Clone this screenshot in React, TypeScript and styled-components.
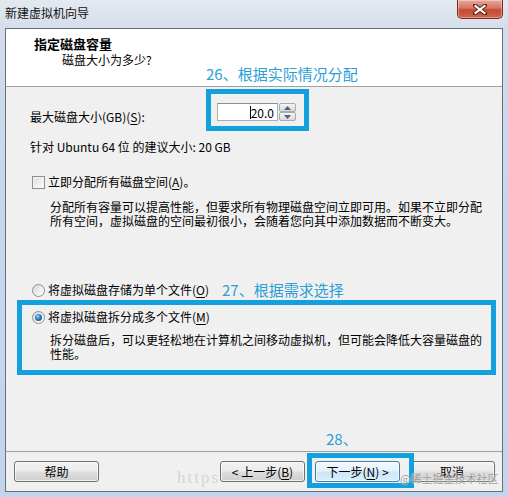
import styled, { createGlobalStyle } from 'styled-components';

const ACCENT = '#14a0dc';
const NOTE = '#2b9ed6';

const GlobalStyle = createGlobalStyle`
  html, body {
    margin: 0;
    padding: 0;
  }
  body {
    font-family: "Noto Sans CJK SC", "Noto Sans", sans-serif;
    font-size: 12px;
    color: #000;
  }
`;

const Window = styled.div`
  width: 508px;
  height: 497px;
  display: flex;
  flex-direction: column;
  background: linear-gradient(180deg, #e3e9f0 0%, #d3ddea 6%, #c9d8ec 30%, #c3d4ec 100%);
  overflow: hidden;
`;

const TitleBar = styled.div`
  height: 28px;
  flex: none;
  display: flex;
  align-items: flex-start;
  justify-content: space-between;
  padding: 0 5px;
`;

const TitleText = styled.span`
  line-height: 26px;
  font-size: 12px;
  color: #111;
`;

const CloseButton = styled.div`
  width: 46px;
  height: 19px;
  box-sizing: border-box;
  display: flex;
  align-items: center;
  justify-content: center;
  border: 1px solid #7a2a20;
  border-top: none;
  border-radius: 0 0 5px 5px;
  background: linear-gradient(180deg, #e9a89a 0%, #d7735f 45%, #c24a35 55%, #d0664c 100%);
  box-shadow: inset 0 0 0 1px rgba(255, 255, 255, 0.35);
`;

const Client = styled.div`
  margin: 0 5px;
  height: 464px;
  box-sizing: border-box;
  border: 1px solid #66717f;
  background: #f0f0f0;
  display: flex;
  flex-direction: column;
`;

const Header = styled.div`
  height: 58px;
  flex: none;
  box-sizing: border-box;
  background: #fff;
  border-bottom: 1px solid #a0a0a0;
  padding: 7px 0 0 28px;
  display: flex;
  flex-direction: column;
  align-items: flex-start;
`;

const HeaderTitle = styled.div`
  font-size: 13px;
  font-weight: 700;
  line-height: 16px;
`;

const HeaderSub = styled.div`
  margin: 1px 0 0 28px;
  line-height: 14px;
`;

const Note = styled.span<{ $size?: number }>`
  color: ${NOTE};
  font-size: ${({ $size }) => $size ?? 15}px;
  line-height: 18px;
  white-space: nowrap;
`;

const HeaderNote = styled(Note)`
  margin: -2px 0 0 172px;
`;

const Body = styled.div`
  flex: 1;
  display: flex;
  flex-direction: column;
  padding-top: 2px;
`;

const SizeRow = styled.div`
  display: flex;
  align-items: flex-start;
  padding-left: 24px;
`;

const SizeLabel = styled.span`
  width: 176px;
  padding-top: 20px;
  line-height: 16px;
`;

const Highlight = styled.div`
  border: 5px solid ${ACCENT};
  padding: 9px 8px 5px 6px;
`;

const Spin = styled.div`
  display: flex;
  height: 18px;
`;

const SpinInput = styled.div`
  width: 61px;
  height: 18px;
  box-sizing: border-box;
  border: 1px solid #abadb3;
  border-top-color: #8e8f8f;
  background: #fff;
  display: flex;
  align-items: center;
  justify-content: flex-end;
  padding-right: 3px;
  font-size: 12px;
`;

const Caret = styled.span`
  width: 1px;
  height: 13px;
  background: #000;
`;

const SpinArrows = styled.div`
  width: 17px;
  margin-left: 1px;
  display: flex;
  flex-direction: column;
`;

const SpinArrow = styled.div`
  flex: 1;
  box-sizing: border-box;
  border: 1px solid #a9abb1;
  border-radius: 2px;
  background: linear-gradient(180deg, #f7f7f7 0%, #e6e6e6 50%, #dadada 100%);
  display: flex;
  align-items: center;
  justify-content: center;
`;

const Line = styled.div<{ $top: number; $left: number }>`
  margin-top: ${({ $top }) => $top}px;
  padding-left: ${({ $left }) => $left}px;
  line-height: 16px;
  white-space: nowrap;
`;

const OptionRow = styled.label<{ $top: number; $left: number }>`
  display: flex;
  align-items: center;
  gap: 3px;
  margin-top: ${({ $top }) => $top}px;
  padding-left: ${({ $left }) => $left}px;
  line-height: 16px;
  white-space: nowrap;
`;

const CheckBox = styled.span`
  width: 13px;
  height: 13px;
  box-sizing: border-box;
  border: 1px solid #8f8f8f;
  background: linear-gradient(135deg, #dcdcdc 0%, #f2f2f2 60%, #fbfbfb 100%);
  box-shadow: inset 0 0 0 1px #f4f4f4;
`;

const Radio = styled.span<{ $checked?: boolean }>`
  width: 13px;
  height: 13px;
  box-sizing: border-box;
  border-radius: 50%;
  border: 1px solid #8f8f8f;
  background: linear-gradient(135deg, #d8d8d8 0%, #f4f4f4 70%, #ffffff 100%);
  display: flex;
  align-items: center;
  justify-content: center;

  &::after {
    content: '';
    display: ${({ $checked }) => ($checked ? 'block' : 'none')};
    width: 7px;
    height: 7px;
    border-radius: 50%;
    background: radial-gradient(circle at 40% 35%, #9fd3f4 0%, #2b7fbe 45%, #163f66 100%);
  }
`;

const Key = styled.u`
  text-decoration-thickness: 1px;
  text-underline-offset: 2px;
`;

const Paragraph = styled.div<{ $top: number; $left: number }>`
  margin-top: ${({ $top }) => $top}px;
  padding-left: ${({ $left }) => $left}px;
  line-height: 14px;
  white-space: nowrap;
`;

const RadioNote = styled(Note)`
  margin-left: 10px;
`;

const SplitBox = styled.div`
  margin: 1px 6px 0 11px;
  border: 5px solid ${ACCENT};
  padding: 4px 0 9px 10px;
`;

const Footer = styled.div`
  height: 40px;
  flex: none;
  box-sizing: border-box;
  border-top: 1px solid #a0a0a0;
  padding: 9px 7px 0 8px;
  display: flex;
  align-items: flex-start;
  position: relative;
`;

const Button = styled.div<{ $default?: boolean }>`
  width: 85px;
  height: 21px;
  box-sizing: border-box;
  border: 1px solid ${({ $default }) => ($default ? '#3c7fb1' : '#707070')};
  border-radius: 3px;
  background: ${({ $default }) =>
    $default
      ? 'linear-gradient(180deg, #f1f9fe 0%, #e3f2fc 48%, #cbe7f8 52%, #d8eefb 100%)'
      : 'linear-gradient(180deg, #f2f2f2 0%, #ebebeb 48%, #dddddd 52%, #cfcfcf 100%)'};
  box-shadow: inset 0 0 0 1px rgba(255, 255, 255, 0.7);
  display: flex;
  align-items: center;
  justify-content: center;
  font-size: 12px;
  white-space: nowrap;
  position: relative;
  z-index: 1;
`;

const BackButton = styled(Button)`
  margin-left: auto;
`;

const NextWrap = styled.div`
  position: relative;
  margin-left: 10px;
  z-index: 2;
`;

const NextHighlight = styled.div`
  position: absolute;
  top: -8px;
  left: -8px;
  right: -14px;
  bottom: -6px;
  border: 5px solid ${ACCENT};
  pointer-events: none;
`;

const StepNote = styled(Note)`
  position: absolute;
  left: 11px;
  top: -31px;
`;

const CancelButton = styled(Button)`
  margin-left: 9px;
  width: 86px;
`;

const Watermark = styled.span`
  position: absolute;
  left: 171px;
  top: 14px;
  font-family: "Liberation Serif", serif;
  font-size: 17px;
  letter-spacing: 2px;
  color: #d6d6d6;
  line-height: 24px;
  white-space: nowrap;
  z-index: 0;
`;

const Badge = styled.span`
  position: absolute;
  left: 394px;
  top: 19px;
  font-size: 11px;
  line-height: 14px;
  color: rgba(120, 120, 120, 0.75);
  text-shadow: 0 0 1px #fff;
  z-index: 3;
  white-space: nowrap;
`;

function CloseGlyph() {
  return (
    <svg width="14" height="11" viewBox="0 0 14 11">
      <path d="M2 1.5 L12 9.5 M12 1.5 L2 9.5" stroke="#5a1c14" strokeWidth="4" strokeLinecap="square" />
      <path d="M2.5 2 L11.5 9 M11.5 2 L2.5 9" stroke="#fff" strokeWidth="2.2" strokeLinecap="square" />
    </svg>
  );
}

function Triangle({ up }: { up?: boolean }) {
  return (
    <svg width="7" height="4" viewBox="0 0 7 4">
      <path d={up ? 'M0 4 L3.5 0 L7 4 Z' : 'M0 0 L3.5 4 L7 0 Z'} fill="#4d6185" />
    </svg>
  );
}

export default function App() {
  return (
    <>
      <GlobalStyle />
      <Window>
        <TitleBar>
          <TitleText>新建虚拟机向导</TitleText>
          <CloseButton>
            <CloseGlyph />
          </CloseButton>
        </TitleBar>
        <Client>
          <Header>
            <HeaderTitle>指定磁盘容量</HeaderTitle>
            <HeaderSub>磁盘大小为多少?</HeaderSub>
            <HeaderNote>26、根据实际情况分配</HeaderNote>
          </Header>
          <Body>
            <SizeRow>
              <SizeLabel>
                最大磁盘大小(GB)(<Key>S</Key>):
              </SizeLabel>
              <Highlight>
                <Spin>
                  <SpinInput>
                    <Caret />
                    20.0
                  </SpinInput>
                  <SpinArrows>
                    <SpinArrow>
                      <Triangle up />
                    </SpinArrow>
                    <SpinArrow>
                      <Triangle />
                    </SpinArrow>
                  </SpinArrows>
                </Spin>
              </Highlight>
            </SizeRow>
            <Line $top={8} $left={24}>
              针对 Ubuntu 64 位 的建议大小: 20 GB
            </Line>
            <OptionRow $top={19} $left={26}>
              <CheckBox />
              <span>
                立即分配所有磁盘空间(<Key>A</Key>)。
              </span>
            </OptionRow>
            <Paragraph $top={10} $left={44}>
              分配所有容量可以提高性能，但要求所有物理磁盘空间立即可用。如果不立即分配
              <br />
              所有空间，虚拟磁盘的空间最初很小，会随着您向其中添加数据而不断变大。
            </Paragraph>
            <OptionRow $top={53} $left={26}>
              <Radio />
              <span>
                将虚拟磁盘存储为单个文件(<Key>O</Key>)
              </span>
              <RadioNote>27、根据需求选择</RadioNote>
            </OptionRow>
            <SplitBox>
              <OptionRow $top={0} $left={0}>
                <Radio $checked />
                <span>
                  将虚拟磁盘拆分成多个文件(<Key>M</Key>)
                </span>
              </OptionRow>
              <Paragraph $top={8} $left={18}>
                拆分磁盘后，可以更轻松地在计算机之间移动虚拟机，但可能会降低大容量磁盘的
                <br />
                性能。
              </Paragraph>
            </SplitBox>
          </Body>
          <Footer>
            <Watermark>https</Watermark>
            <Button>帮助</Button>
            <BackButton>
              &lt; 上一步(<Key>B</Key>)
            </BackButton>
            <NextWrap>
              <StepNote>28、</StepNote>
              <Button $default>
                下一步(<Key>N</Key>) &gt;
              </Button>
              <NextHighlight />
            </NextWrap>
            <CancelButton>取消</CancelButton>
            <Badge>@稀土掘金技术社区</Badge>
          </Footer>
        </Client>
      </Window>
    </>
  );
}
